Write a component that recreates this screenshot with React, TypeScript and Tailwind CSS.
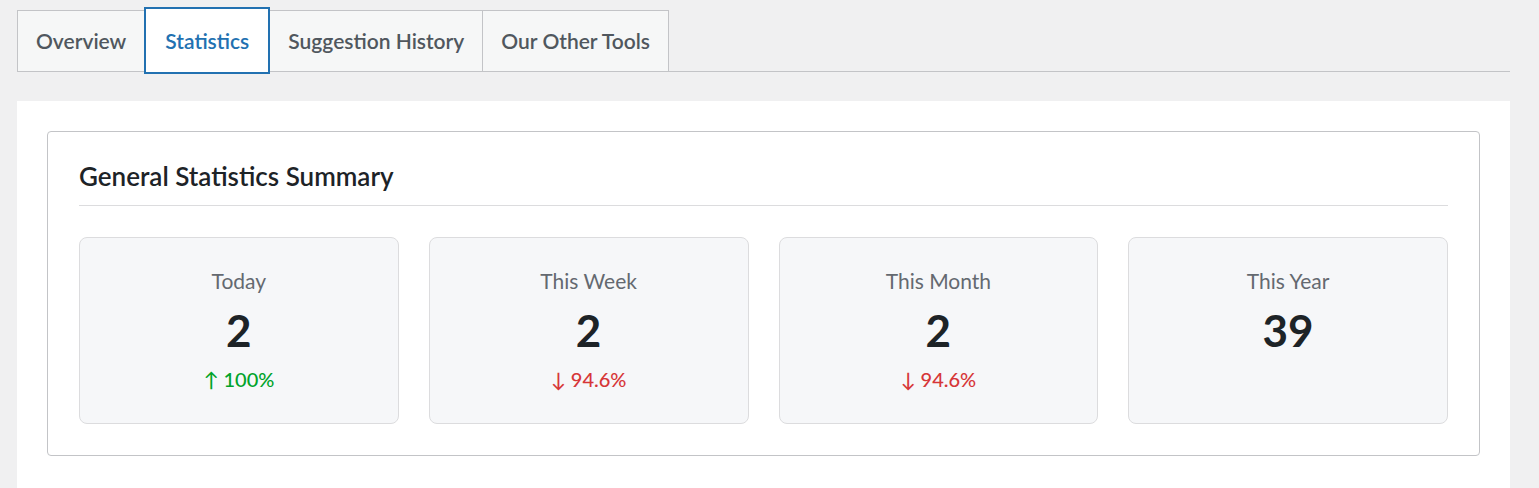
import React from "react";

const font = { fontFamily: 'Lato, "Noto Sans", sans-serif' };

type Stat = { label: string; value: string; change?: { dir: "up" | "down"; text: string } };

const stats: Stat[] = [
  { label: "Today", value: "2", change: { dir: "up", text: "100%" } },
  { label: "This Week", value: "2", change: { dir: "down", text: "94.6%" } },
  { label: "This Month", value: "2", change: { dir: "down", text: "94.6%" } },
  { label: "This Year", value: "39" },
];

export default function App() {
  const tabs = ["Overview", "Statistics", "Suggestion History", "Our Other Tools"];
  return (
    <div className="min-h-[488px] w-full bg-[#f0f0f1] overflow-hidden" style={font}>
      <div className="pl-[17px] pr-[29px] pt-[10px]">
        <div className="flex border-b border-[#c3c4c7] h-[62px]">
          {tabs.map((t, i) =>
            i === 1 ? (
              <div
                key={t}
                className="relative z-10 -mt-[3px] -ml-px h-[67px] px-[19px] flex items-center bg-white border-2 border-[#2271b1] text-[#2271b1] text-[21px] font-semibold"
              >
                {t}
              </div>
            ) : (
              <div
                key={t}
                className={`h-[62px] px-[18px] flex items-center bg-[#f6f7f7] border border-[#c3c4c7] text-[#50575e] text-[21px] font-semibold ${i > 0 ? "-ml-px" : ""}`}
              >
                {t}
              </div>
            )
          )}
        </div>
        <div className="mt-[29px] bg-white px-[30px] pt-[30px] pb-[40px]">
          <div className="border border-[#c3c4c7] rounded-[4px] px-[31px] pt-[27px] pb-[31px]">
            <h2 className="text-[26px] font-semibold text-[#1d2327] leading-[34px] pb-[12px] border-b border-[#dcdcde]">
              General Statistics Summary
            </h2>
            <div className="grid grid-cols-4 gap-[30px] mt-[31px]">
              {stats.map((s) => (
                <div
                  key={s.label}
                  className="h-[187px] bg-[#f6f7f9] border border-[#dcdcde] rounded-[8px] flex flex-col items-center pt-[29px]"
                >
                  <div className="text-[21px] text-[#646970] leading-[28px]">{s.label}</div>
                  <div className="text-[44px] font-bold text-[#1d2327] leading-[56px] mt-[7px]">{s.value}</div>
                  {s.change && (
                    <div
                      className={`text-[20px] font-medium leading-[28px] mt-[7px] ${
                        s.change.dir === "up" ? "text-[#00a32a]" : "text-[#d63638]"
                      }`}
                    >
                      {s.change.dir === "up" ? "↑" : "↓"}&nbsp;{s.change.text}
                    </div>
                  )}
                </div>
              ))}
            </div>
          </div>
        </div>
      </div>
    </div>
  );
}
